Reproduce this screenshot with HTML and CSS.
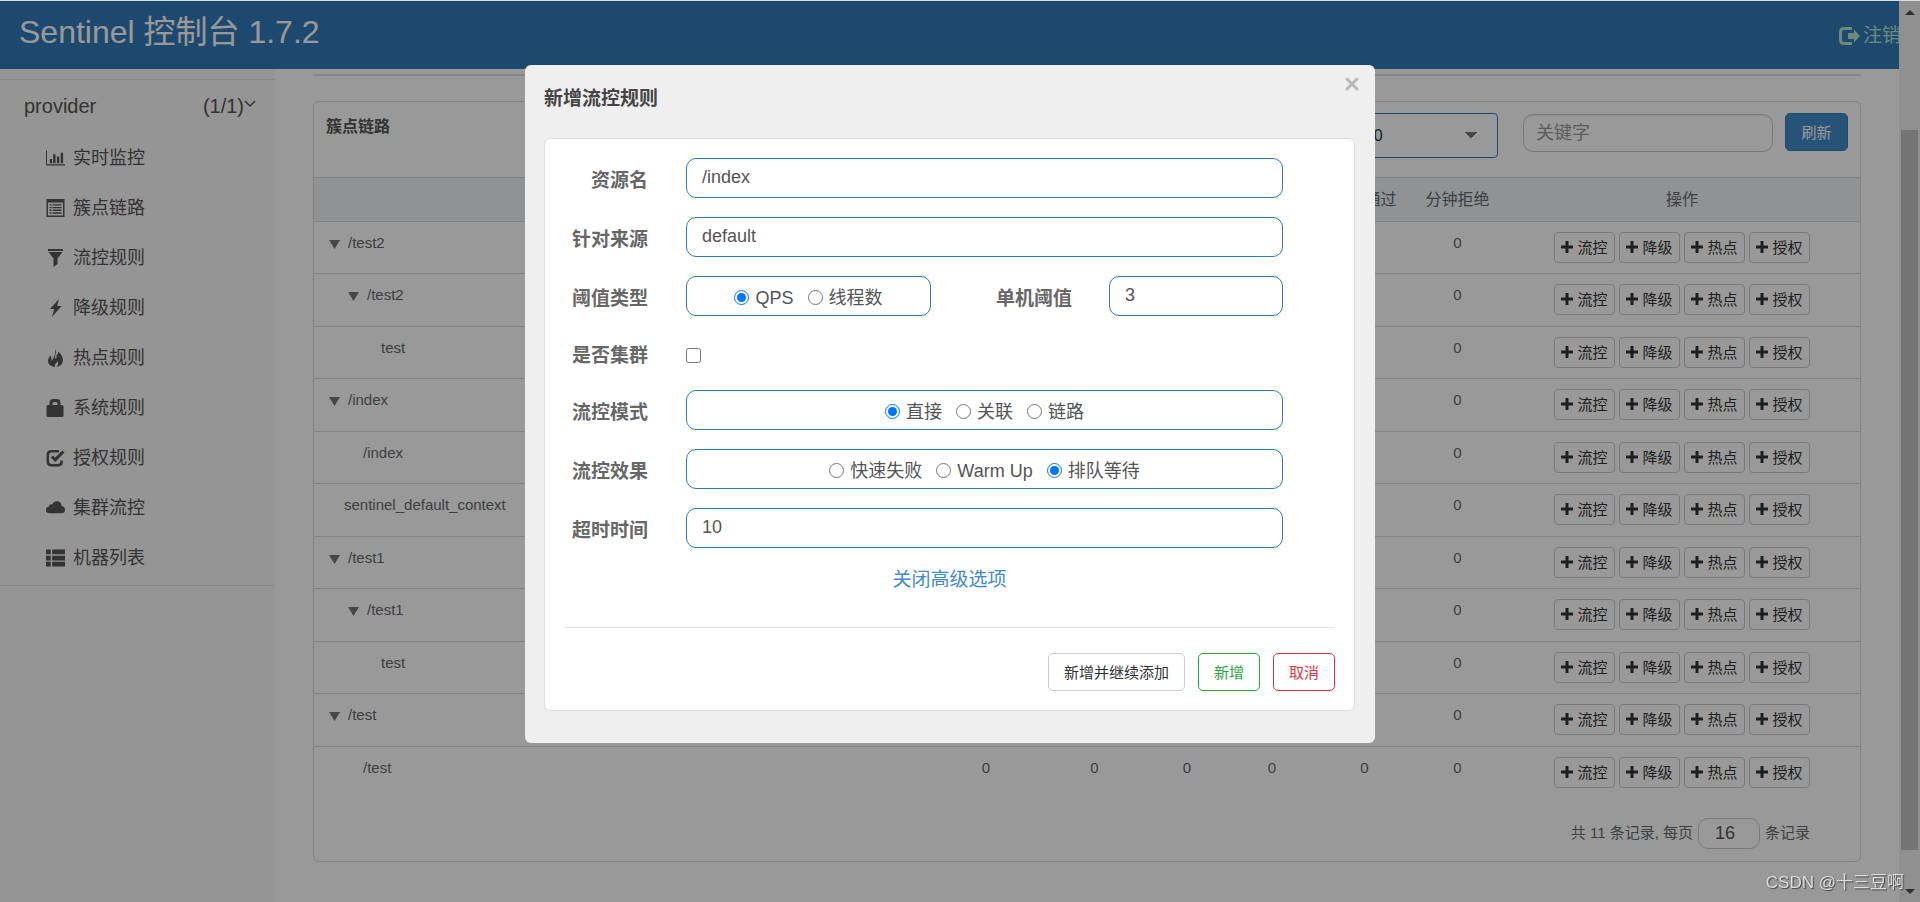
FILE: index.html
```html
<!DOCTYPE html>
<html lang="zh-CN">
<head>
<meta charset="utf-8">
<title>Sentinel 控制台</title>
<link rel="stylesheet" href="styles.css">
</head>
<body>
<svg class="sprite" aria-hidden="true">
  <symbol id="i-chart" viewBox="0 0 20 16"><path d="M0 0h1v14.500h19V16H0zM4 9h2.500v4.500H4zM7.500 4H10v9.500H7.500zM11.500 6.500H14v7h-2.500zM15.500 2.500H18v11h-2.500z"/></symbol>
  <symbol id="i-listalt" viewBox="0 0 18 18"><path fill-rule="evenodd" d="M0 0h18v18H0zM1.500 3.500v13h15v-13zM3 5.200h2v1.400H3zm3 0h9v1.400H6zM3 7.900h2v1.400H3zm3 0h9v1.400H6zM3 10.600h2V12H3zm3 0h9V12H6zM3 13.300h2v1.400H3zm3 0h9v1.400H6z"/></symbol>
  <symbol id="i-filter" viewBox="0 0 18 18"><path d="M1.500 0h15v2h-15zM2 3h14l-5 6.500V15l-4 3V9.500z"/></symbol>
  <symbol id="i-flash" viewBox="0 0 18 18"><path d="M12.500 0 3.500 10h4.300L5.500 18l9.500-11H10.500z"/></symbol>
  <symbol id="i-fire" viewBox="0 0 18 18"><path d="M8.500 0C11 3 7.500 7 9 10c1-1 1.500-2.500.8-4C12 5 11.500 3.500 11.500 2.500 15 5 17 9 16.300 12.500 15.800 15.500 13 17.500 10 18c2-2 2-4 1-6-.8 2.500-3.500 3-2.500 6C4 17.500 1.500 15 1.500 12c0-3 1.800-3.500 1.800-5.500C5 7.500 5.200 10 4.800 12 7 10 9.500 5.500 8.500 0z"/></symbol>
  <symbol id="i-lock" viewBox="0 0 18 18"><path fill-rule="evenodd" d="M3 6V4q0-4 4-4h3q4 0 4 4v2h1.500q1.500 0 1.500 1.500v9q0 1.500-1.500 1.500h-14Q0 18 0 16.500v-9Q0 6 1.500 6zm3 0h5V4.500Q11 3 9.500 3h-2Q6 3 6 4.500z"/></symbol>
  <symbol id="i-check" viewBox="0 0 18 18"><path fill="none" stroke="currentColor" stroke-width="2.500" d="M12.500 2.300H5Q1.300 2.300 1.300 6v6.500Q1.300 16.200 5 16.200h6.500q3.700 0 3.700-3.700V11.500"/><path fill="none" stroke="currentColor" stroke-width="3.200" d="m5.500 7.500 3.200 3.300 8.200-8.300"/></symbol>
  <symbol id="i-cloud" viewBox="0 0 20 18"><path d="M4 14.500Q0 14.500 0 11q0-3 3.300-3.500Q3 5 5.500 5q.8 0 1.200.4Q8 2 11.500 2q4.500 0 5 5Q20 7.500 20 11q0 3.500-3.500 3.500z"/></symbol>
  <symbol id="i-thlist" viewBox="0 0 20 18"><path d="M0 0h5v5H0zM6.500 0H20v5H6.500zM0 6.500h5v5H0zM6.500 6.500H20v5H6.500zM0 13h5v5H0zM6.500 13H20v5H6.500z"/></symbol>
  <symbol id="i-logout" viewBox="0 0 21 18"><path d="M13 0v3H5Q3 3 3 5v8q0 2 2 2h8v3H5q-5 0-5-5V5q0-5 5-5zM9 6h6V2.500L21 9l-6 6.500V12H9z"/></symbol>
  <symbol id="i-plus" viewBox="0 0 12 12"><path d="M4.500 0h3v4.500H12v3H7.500V12h-3V7.500H0v-3h4.500z"/></symbol>
</svg>

<div class="app">
  <div class="page">
    <header class="topbar">
      <h1 class="brand">Sentinel 控制台 1.7.2</h1>
      <a class="logout" href="#"><svg class="logout-icon"><use href="#i-logout"/></svg>注销</a>
    </header>
    <div class="body">
      <nav class="sidebar">
        <div class="nav-group">
          <a class="nav-app" href="#"><span>provider</span><span class="nav-count">(1/1)<svg class="chevron" viewBox="0 0 12 8"><path d="m1 1 5 5 5-5"/></svg></span></a>
          <ul class="nav-list" id="nav"></ul>
        </div>
      </nav>
      <main class="content">
        <hr class="divider">
        <section class="card">
          <div class="card-head">
            <h2 class="card-title">簇点链路</h2>
            <div class="tools">
              <select class="machine" aria-label="机器"><option>192.168.1.2:8720</option></select>
              <input class="keyword" type="text" placeholder="关键字" aria-label="关键字">
              <button class="refresh" type="button">刷新</button>
            </div>
          </div>
          <table class="grid">
            <thead><tr>
              <th class="c-name"></th><th class="c-pass">通过QPS</th><th class="c-block">拒绝QPS</th><th class="c-thread">线程数</th><th class="c-rt">平均RT</th><th class="c-min">分钟通过</th><th class="c-min">分钟拒绝</th><th class="c-ops">操作</th>
            </tr></thead>
            <tbody id="rows"></tbody>
          </table>
          <div class="pager">
            <label for="size">共 11 条记录, 每页</label>
            <input class="size" id="size" type="text" value="16">
            <span>条记录</span>
          </div>
        </section>
      </main>
    </div>
  </div>
  <div class="scrollbar" aria-hidden="true">
    <span class="arrow up"></span><span class="thumb"></span><span class="arrow down"></span>
  </div>
</div>

<div class="overlay">
  <form class="modal" role="dialog" aria-labelledby="modal-title">
    <button class="close" type="button" aria-label="关闭"><svg viewBox="0 0 14 14"><path d="m2 2 10 10M12 2 2 12"/></svg></button>
    <h2 class="modal-title" id="modal-title">新增流控规则</h2>
    <div class="panel">
      <div class="fields">
        <label class="label" for="res">资源名</label>
        <input class="box" id="res" type="text" value="/index">
        <label class="label" for="app">针对来源</label>
        <input class="box" id="app" type="text" value="default">
        <span class="label" id="l-grade">阈值类型</span>
        <div class="split">
          <div class="box radios" role="radiogroup" aria-labelledby="l-grade">
            <label class="opt"><input type="radio" name="grade" checked>QPS</label>
            <label class="opt"><input type="radio" name="grade">线程数</label>
          </div>
          <label class="label" for="count">单机阈值</label>
          <input class="box" id="count" type="text" value="3">
        </div>
        <label class="label" for="cluster">是否集群</label>
        <div class="check-row"><input id="cluster" type="checkbox"></div>
        <span class="label" id="l-mode">流控模式</span>
        <div class="box radios" role="radiogroup" aria-labelledby="l-mode">
          <label class="opt"><input type="radio" name="mode" checked>直接</label>
          <label class="opt"><input type="radio" name="mode">关联</label>
          <label class="opt"><input type="radio" name="mode">链路</label>
        </div>
        <span class="label" id="l-effect">流控效果</span>
        <div class="box radios" role="radiogroup" aria-labelledby="l-effect">
          <label class="opt"><input type="radio" name="effect">快速失败</label>
          <label class="opt"><input type="radio" name="effect">Warm Up</label>
          <label class="opt"><input type="radio" name="effect" checked>排队等待</label>
        </div>
        <label class="label" for="timeout">超时时间</label>
        <input class="box" id="timeout" type="text" value="10">
      </div>
      <a class="advanced" href="#">关闭高级选项</a>
      <div class="actions">
        <button class="btn" type="button">新增并继续添加</button>
        <button class="btn btn-ok" type="button">新增</button>
        <button class="btn btn-cancel" type="button">取消</button>
      </div>
    </div>
  </form>
</div>
<div class="watermark">CSDN @十三豆啊</div>
<script src="app.js"></script>
</body>
</html>
```
FILE: styles.css
```css
* { box-sizing: border-box; }
html, body { height: 100%; }
body {
  margin: 0;
  overflow: hidden;
  background: #fff;
  color: #676a6c;
  font-family: "Liberation Sans", "Noto Sans CJK SC", sans-serif;
  font-size: 15px;
  line-height: 20px;
}
h1, h2, ul { margin: 0; padding: 0; font-weight: normal; }
a { text-decoration: none; }
button, input, select { font-family: inherit; margin: 0; }
.sprite { display: none; }
svg { fill: currentColor; }

.app { display: grid; grid-template-columns: 1fr 21px; height: 100vh; border-top: 1px solid #dcdcdc; }
.page { display: flex; flex-direction: column; min-width: 0; overflow: hidden; }

.topbar { display: flex; justify-content: space-between; align-items: flex-start; flex: none; height: 68px; padding-left: 19px; background: #337ab7; }
.brand { color: #fff; font-size: 32px; line-height: 62px; }
.logout { display: flex; align-items: center; width: 60px; gap: 3px; color: #b5e6cd; font-size: 19px; line-height: 70px; white-space: nowrap; }
.logout-icon { flex: none; width: 21px; height: 18px; }

.body { display: flex; flex: 1; min-height: 0; }
.sidebar { flex: none; width: 275px; padding-top: 10px; background: #f8f8f8; }
.nav-group { border-top: 1px solid #e7e7e7; border-bottom: 1px solid #e7e7e7; padding-bottom: 2px; }
.nav-app { display: flex; justify-content: space-between; padding: 0 19px 0 24px; color: #555; font-size: 20px; line-height: 53px; }
.nav-count { display: flex; }
.chevron { width: 12px; height: 8px; margin-top: 20px; fill: none; stroke: #555; stroke-width: 1.5; }
.nav-list { list-style: none; }
.nav-link { display: flex; align-items: center; gap: 8px; height: 50px; padding-left: 46px; color: #555; font-size: 18px; }
.nav-icon { width: 19px; height: 18px; }

.content { flex: 1; min-width: 0; padding: 5px 38px 0; }
.divider { height: 2px; margin: 0 0 25px; border: 0; background: #e2e2e2; }
.card { border: 1px solid #dadada; border-radius: 6px; }
.card-head { display: flex; justify-content: space-between; height: 75px; padding: 11px 12px 0; }
.card-title { color: #555; font-size: 16px; line-height: 28px; font-weight: bold; }
.tools { display: flex; align-items: flex-start; }
.machine {
  appearance: none;
  width: 252px; height: 45px; margin-right: 25px; padding: 0 11px;
  border: 1px solid #337ab7; border-radius: 4px;
  background: #fff; color: #333; font-size: 16px;
  background-image: linear-gradient(to bottom right, #777 50%, transparent 50%), linear-gradient(to bottom left, #777 50%, transparent 50%);
  background-size: 6px 7px;
  background-position: right 20px center, right 26px center;
  background-repeat: no-repeat;
}
.keyword { width: 250px; height: 38px; margin: 1px 12px 0 0; padding: 0 12px; border: 1px solid #ccc; border-radius: 10px; background: #fff; font-size: 18px; box-shadow: inset 0 1px 1px #eee; }
.keyword::placeholder { color: #999; }
.refresh { width: 63px; height: 38px; padding: 0 0 2px; border: 1px solid #357ebd; border-radius: 5px; background: #428bca; color: #fff; font-size: 15px; }

.grid { width: 100%; border-collapse: collapse; table-layout: fixed; color: #676a6c; text-align: center; }
.grid th { height: 44px; padding: 0; border-top: 1px solid #dadada; background: #f0f3f7; font-size: 16px; font-weight: normal; }
.c-pass { width: 110px; } .c-block { width: 107px; } .c-thread { width: 78px; } .c-rt { width: 92px; } .c-min { width: 93px; } .c-ops { width: 356px; }
.grid td { height: 52px; padding: 10px 0 0; border-top: 1px solid #dadada; line-height: 22px; vertical-align: top; }
.grid tr:nth-child(even) td { height: 53px; }
.node { display: flex; align-items: center; gap: 8px; }
.caret { width: 11px; height: 9px; margin-top: 2px; fill: #777; }
.l1 { padding-left: 15px; } .l1.leaf { padding-left: 30px; }
.l2 { padding-left: 34px; } .l2.leaf { padding-left: 49px; }
.l3.leaf { padding-left: 67px; }
.ops { display: flex; justify-content: center; gap: 4px; }
.op { display: flex; align-items: center; justify-content: center; gap: 4px; width: 61px; height: 31px; padding: 0 0 2px; border: 1px solid #ccc; border-radius: 4px; background: #fff; color: #333; font-size: 15px; }
.op svg { width: 12px; height: 12px; }
.pager { display: flex; justify-content: flex-end; align-items: center; gap: 5px; padding: 19px 50px 12px 0; }
.size { width: 62px; height: 31px; padding: 0 16px; border: 1px solid #ccc; border-radius: 10px; background: #fff; color: #555; font-size: 18px; }

.scrollbar { display: flex; flex-direction: column; align-items: center; padding: 9px 0 8px; background: #f1f1f1; }
.arrow { border: 5px solid transparent; }
.up { border-top: 0; border-bottom-color: #505050; }
.down { border-bottom: 0; border-top-color: #505050; }
.thumb { width: 17px; flex: 1; margin: 115px 0 39px; background: #c1c1c1; }

.overlay { position: fixed; inset: 1px 0 0; padding: 64px 20px 0 0; background: rgba(0, 0, 0, .4); }
.modal { position: relative; width: 850px; margin: 0 auto; padding: 21px 20px 32px 19px; border-radius: 6px; background: #efefef; }
.close { position: absolute; top: 12px; right: 16px; width: 14px; height: 14px; padding: 0; border: 0; background: none; }
.close svg { display: block; stroke: #b8b8b8; stroke-width: 3; stroke-linecap: round; }
.modal-title { color: #444; font-size: 19px; line-height: 26px; font-weight: bold; }
.panel { margin-top: 26px; padding: 19px; border: 1px solid #ddd; border-radius: 6px; background: #fff; }
.fields { display: grid; grid-template-columns: 84px 1fr; column-gap: 38px; row-gap: 19px; padding-right: 52px; }
.label { align-self: center; padding-top: 6px; color: #676767; font-size: 19px; line-height: 24px; font-weight: bold; text-align: right; white-space: nowrap; }
.box { width: 100%; height: 40px; padding: 0 15px 1px; border: 1px solid #337ab7; border-radius: 10px; background: #fff; color: #555; font-size: 18px; }
.split { display: grid; grid-template-columns: 245px 1fr 174px; column-gap: 37px; }
.radios { display: flex; align-items: center; justify-content: center; gap: 14px; padding: 4px 0 0; }
.opt { display: flex; align-items: center; gap: 6px; }
.opt input, .check-row input { width: 15px; height: 15px; }
.opt input { margin-bottom: 2px; }
.check-row { display: flex; align-items: center; height: 36px; padding-top: 4px; }
.advanced { display: block; padding: 20px 0 35px; color: #428bca; font-size: 19px; line-height: 24px; text-align: center; }
.actions { display: flex; justify-content: flex-end; gap: 13px; padding-top: 25px; border-top: 1px solid #e5e5e5; }
.btn { height: 38px; padding: 0 15px 2px; border: 1px solid #ccc; border-radius: 5px; background: #fff; color: #333; font-size: 15px; }
.btn-ok { border-color: #28a745; color: #28a745; }
.btn-cancel { border-color: #dc3545; color: #dc3545; }

.watermark { position: fixed; right: 16px; bottom: 7px; color: #ddd; font-size: 17px; line-height: 24px; text-shadow: 1px 1px 1px #444; }
```
FILE: app.js
```js
const nav = [
  ['i-chart', '实时监控'], ['i-listalt', '簇点链路'], ['i-filter', '流控规则'],
  ['i-flash', '降级规则'], ['i-fire', '热点规则'], ['i-lock', '系统规则'],
  ['i-check', '授权规则'], ['i-cloud', '集群流控'], ['i-thlist', '机器列表']
];
document.getElementById('nav').innerHTML = nav.map(([icon, text]) =>
  `<li><a class="nav-link" href="#"><svg class="nav-icon"><use href="#${icon}"/></svg>${text}</a></li>`).join('');

const nodes = [
  ['/test2', 1, true], ['/test2', 2, true], ['test', 3, false],
  ['/index', 1, true], ['/index', 2, false], ['sentinel_default_context', 1, false],
  ['/test1', 1, true], ['/test1', 2, true], ['test', 3, false],
  ['/test', 1, true], ['/test', 2, false]
];
const caret = '<svg class="caret" viewBox="0 0 11 9"><path d="M0 0h11L5.500 9z"/></svg>';
const ops = ['流控', '降级', '热点', '授权'].map(t =>
  `<button class="op" type="button"><svg><use href="#i-plus"/></svg>${t}</button>`).join('');
document.getElementById('rows').innerHTML = nodes.map(([name, level, open]) =>
  `<tr><td><div class="node l${level}${open ? '' : ' leaf'}">${open ? caret : ''}${name}</div></td>` +
  '<td>0</td>'.repeat(6) + `<td><div class="ops">${ops}</div></td></tr>`).join('');
```
